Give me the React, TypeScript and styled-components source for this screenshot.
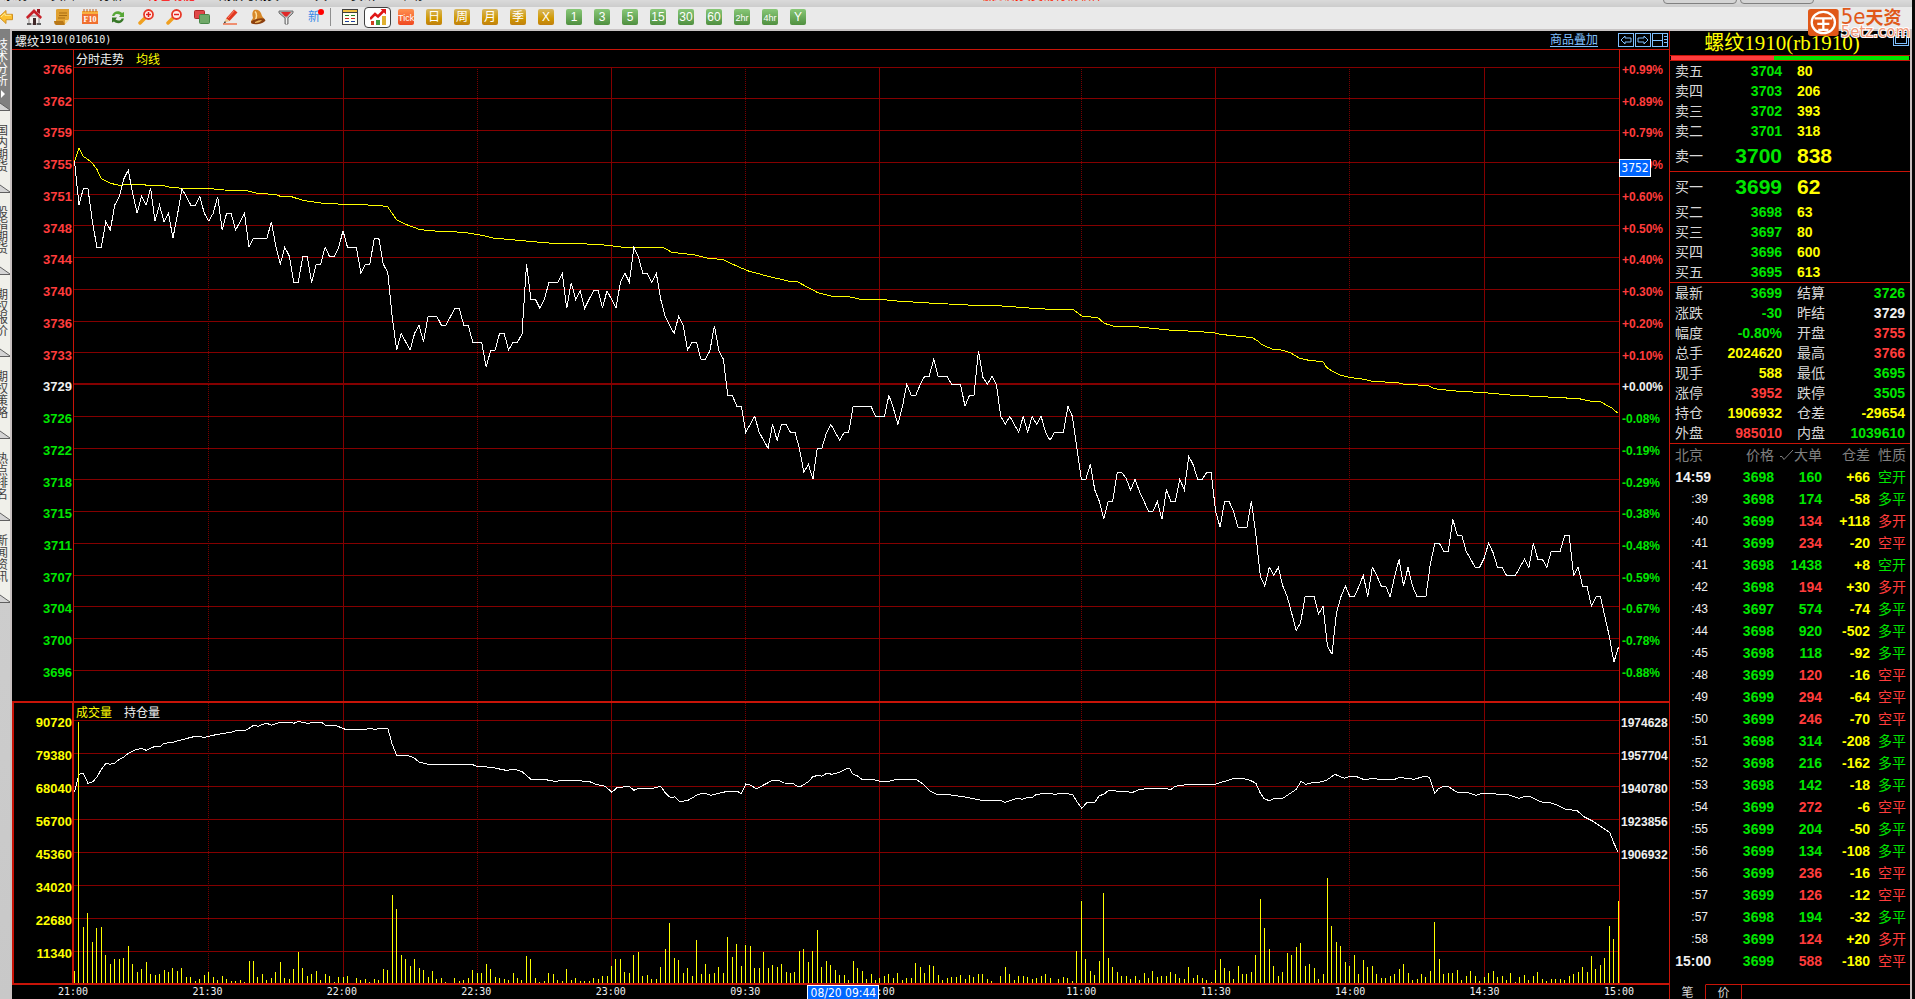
import React from "react";
import styled, { createGlobalStyle, css } from "styled-components";

const color = {
  up: "#ff3c3c",
  down: "#00e600",
  yellow: "#ffff00",
  white: "#f0f0f0",
  label: "#d8d8d8",
  dim: "#808080",
  frame: "#c81408",
  grid: "#840000",
  link: "#80c0ff",
  box: "#0066ff",
};

const cjk = `"Liberation Sans", "Noto Sans CJK SC", sans-serif`;
const mono = `"DejaVu Sans Mono", monospace`;

type Tone = "up" | "down" | "yellow" | "white";

const Global = createGlobalStyle`
  * { box-sizing: border-box; }
  html, body, #root { height: 100%; }
  body { margin: 0; background: #000; font-family: ${cjk}; overflow: hidden; }
  button { font: inherit; color: inherit; border: 0; padding: 0; margin: 0; background: none; cursor: pointer; }
  table { border-collapse: separate; border-spacing: 0; }
  td, th { padding: 0; font-weight: normal; text-align: left; }
`;

/* ---------- market data ---------- */

const MINUTES = 345;
const SUB = 3;

const priceRuns: { base: number; values: number[] }[] = [
  {
    base: 240,
    values: [
      94, 225, 175, 175, 275, 352, 352, 275, 300, 225, 200, 147, 121, 190, 250, 198, 225, 175, 273, 225,
      275, 250, 325, 255, 177, 200, 225, 225, 200, 250, 273, 250, 200, 300, 250, 250, 300, 275, 250, 352,
      325, 325, 325, 325, 275, 350, 402, 352, 378, 458, 458, 380, 380, 458, 403, 403, 352, 380, 380, 355,
      302, 352, 352, 352, 430, 403, 403, 325, 325, 403, 428, 560, 660, 610, 635, 660, 610, 586, 636, 560,
      560, 560, 586, 586, 560, 535, 535, 586, 586, 637, 637, 637, 712, 660, 660, 610, 610, 660, 637, 637,
      612, 403, 508, 508, 535, 508, 458, 458, 458, 430, 535, 458, 508, 482, 535, 508, 482, 482, 535, 482,
    ],
  },
  {
    base: 540,
    values: [
      208, 235, 157, 130, 157, 52, 80, 130, 130, 157, 130, 208, 260, 287, 310, 260, 285, 360, 337, 337,
      388, 388, 362, 287, 362, 388, 496, 496, 529, 529, 607, 583, 559, 607, 631, 655, 583, 631, 583, 583,
      607, 607, 655, 727, 703, 748, 655, 655, 610, 583, 607, 631, 607, 607, 529, 529, 529, 529, 529, 559,
      559, 559, 496, 535, 583, 530, 463, 496, 496, 463, 439, 439, 388, 439, 439, 439, 463, 463, 463, 529,
      496, 496, 362, 442, 463, 439, 463, 559, 583, 559, 583, 607, 559, 607, 559, 583, 559, 607, 631, 607,
      607, 607, 529, 559, 655,
    ],
  },
  {
    base: 840,
    values: [
      448, 448, 403, 480, 514, 568, 514, 514, 427, 427, 445, 480, 448, 485, 514, 544, 544, 514, 568, 480,
      514, 514, 448, 480, 379, 405, 448, 448, 427, 427, 544, 592, 514, 514, 544, 592, 592, 592, 514, 615,
      740, 768, 712, 736, 712, 768, 800, 850, 901, 878, 800, 800, 800, 852, 829, 948, 973, 850, 800, 768,
      800, 800, 770, 736, 800, 712, 736, 768, 768, 800, 740, 688, 768, 712, 768, 800, 800, 800, 700, 640,
      640, 664, 664, 568, 616, 616, 664, 688, 712, 712, 685, 640, 668, 712, 712, 736, 736, 736, 712, 688,
      712, 640, 688, 688, 712, 664, 664, 664, 616, 616, 736, 712, 768, 768, 829, 800, 800, 860, 920, 997,
      952,
    ],
  },
];

const averageRuns: { base: number; points: number[] }[] = [
  {
    base: 240,
    points: [
      0, 94, 1, 55, 2, 80, 3, 88, 4, 100, 5, 118, 6, 146, 8, 160, 10, 166, 12, 163, 15.5, 163, 16, 166,
      19.5, 166, 21, 171, 24, 175, 29.5, 175, 33.5, 180, 38.5, 182, 40.5, 189, 45, 194, 46, 199, 48.5, 200,
      51, 211, 55, 219, 60, 223, 68, 226, 70, 231, 72, 270, 74, 283, 77, 298, 79, 302, 87, 307, 91, 316,
      93.5, 324, 100, 332, 106, 339, 117, 343,
    ],
  },
  {
    base: 540,
    points: [
      119, 46, 122.7, 52, 131.5, 52, 133.5, 67, 138.4, 74, 141.4, 84, 145, 89, 147.8, 107, 150.6, 123,
      155, 139, 159.8, 154, 161.5, 155, 165, 180, 166.1, 188, 169.3, 199, 172.5, 199, 175.7, 208, 180, 208,
      183.7, 213, 190.9, 219, 199.6, 225, 206.4, 227, 213.2, 234, 218, 238, 223.1, 238, 225.1, 258,
      228.7, 263, 230.1, 280, 232.3, 289, 236.3, 289, 242.4, 297,
    ],
  },
  {
    base: 840,
    points: [
      244.5, 0, 247.8, 2, 254.7, 8, 255.9, 13, 263.2, 23, 264.4, 33, 265.2, 43, 267.7, 58, 269.4, 59,
      271.7, 68, 273.7, 84, 275.8, 91, 279, 95, 279.8, 112, 281, 123, 283, 136, 285.1, 143, 287.5, 146,
      290, 154, 295.7, 158, 296.9, 162, 302.5, 167, 303.8, 176, 308.6, 183, 315.1, 188, 320.8, 195,
      328.1, 200, 336.2, 206, 338.7, 213, 341.1, 216, 343.5, 234, 344.8, 249,
    ],
  },
];

const interestRuns: { base: number; points: number[] }[] = [
  {
    base: -39,
    points: [
      0, 305, 1, 253, 2, 250, 3, 280, 4, 276, 5, 262, 6, 238, 7, 220, 8, 223, 9, 219, 10, 208, 11, 202,
      12, 190, 13.5, 180, 15, 175, 16, 181, 18, 169, 19.2, 169, 20, 160, 22, 157, 24, 149, 27, 139,
      29, 142, 32, 133, 35, 127, 36.2, 121, 38.3, 121, 40, 106, 41, 109, 42, 103, 43, 100, 44, 106,
      46, 97, 48.5, 97, 49, 100, 50, 94, 52, 100, 54, 97, 55.2, 97, 56, 105, 58.5, 107, 60.5, 118,
      65, 118, 66, 115, 67, 118, 69, 115, 70, 115, 71, 163, 72, 196, 74, 196, 75, 199, 76, 205, 77, 216,
      79, 223, 88.7, 223, 90, 229,
    ],
  },
  {
    base: 111,
    points: [
      93.1, 82, 96.4, 91, 98.5, 88, 100, 95, 102, 118, 105.3, 119, 107.3, 124, 109.9, 121, 115, 124,
      116.4, 133, 118.6, 139, 120.1, 157, 121.2, 143, 124, 139, 125, 151, 126.1, 145, 129.3, 145, 131, 139,
      132.1, 160, 133.2, 173, 134.2, 170, 135.2, 185, 137.1, 181, 139.4, 163, 141, 160, 142.2, 166,
      145.9, 154, 148.3, 155, 149, 161, 150, 132, 151.1, 136, 152.4, 146, 156, 121, 157.3, 121, 158.6, 129,
      160.5, 130, 161.5, 139, 162.4, 139, 164.1, 124, 165, 110, 166.2, 106, 167, 109, 168.1, 100,
      169.3, 103, 171, 97, 172.7, 85, 173.2, 85, 173.8, 101, 175.1, 109, 175.9, 118, 178.3, 118, 180, 124,
      181.9, 124, 183.5, 119, 188.1, 118, 189.7, 133, 191.3, 154, 193, 165, 194.6, 163, 198.6, 170,
      202.7, 181, 206.9, 181, 207.9, 187, 209.2, 181, 210.8, 175, 211.8, 178, 212.8, 173, 214.1, 172,
      215, 163, 217.3, 160, 219.2, 163, 220.5, 160, 223, 163, 224.1, 187, 225.1, 205, 226.2, 188, 228, 187,
      229, 167, 230, 163, 231.1, 151, 233.5, 154, 236.5, 157, 238.1, 148, 240, 146, 244.1, 146, 244.9, 149,
      246, 139, 249, 133, 254.6, 134, 256.3, 127, 259.2, 115, 260.8, 115, 262.7, 121, 264, 130, 264.9, 157,
      265.8, 176, 267, 182, 268.1, 175, 270, 175, 271.7, 160, 273, 148, 274.1, 124, 275.1, 133, 276.5, 128,
      278.2, 127, 279.8, 121, 281.6, 103, 283.8, 115, 285, 109, 286.3, 109, 288.2, 119, 290.3, 115,
      292, 119, 294.9, 119, 296, 112, 299.3, 118, 301.7, 109, 302.8, 112, 303.3, 133, 304, 160, 304.8, 146,
      306.2, 138, 307, 140, 309, 157, 311.1, 157, 313.1, 166, 314.7, 160, 320.4, 164, 322.8, 175,
      324.4, 168, 325.2, 169, 326.9, 181, 328.1, 187, 329.3, 187, 330.9, 193, 333.3, 208, 335.8, 212,
      337.4, 231, 339.5, 245, 341.1, 260, 343.1, 278, 343.9, 307, 344.9, 335,
    ],
  },
];

const volumes = [
  37, 782, 169, 211, 124, 166, 169, 85, 58, 73, 73, 76, 112, 58, 34, 43, 64, 28, 25, 28,
  40, 34, 46, 37, 46, 19, 19, 7, 13, 25, 34, 19, 10, 22, 13, 7, 7, 10, 3, 67,
  67, 19, 28, 10, 16, 34, 64, 16, 13, 43, 94, 46, 22, 28, 37, 10, 28, 22, 3, 19,
  19, 22, 0, 16, 10, 13, 3, 13, 10, 43, 40, 265, 223, 85, 73, 52, 73, 46, 40, 19,
  37, 13, 16, 3, 0, 16, 7, 10, 16, 40, 31, 31, 58, 43, 19, 15, 12, 9, 30, 15,
  9, 81, 72, 15, 3, 6, 30, 27, 9, 6, 42, 9, 15, 6, 6, 6, 15, 12, 21, 21,
  51, 72, 72, 33, 30, 84, 93, 21, 24, 12, 12, 48, 102, 180, 75, 69, 30, 45, 21, 129,
  27, 57, 27, 30, 48, 30, 138, 78, 117, 51, 114, 111, 45, 45, 93, 45, 54, 48, 57, 33,
  30, 33, 96, 102, 63, 96, 159, 48, 66, 54, 39, 24, 24, 9, 66, 45, 36, 12, 27, 9,
  15, 21, 27, 15, 30, 9, 15, 15, 60, 48, 30, 54, 51, 24, 9, 15, 18, 18, 24, 12,
  24, 18, 27, 27, 12, 6, 0, 21, 48, 27, 9, 21, 21, 18, 12, 15, 21, 27, 15, 0,
  12, 18, 15, 6, 96, 246, 72, 36, 24, 66, 270, 75, 48, 33, 21, 21, 12, 21, 9, 30,
  15, 36, 18, 21, 21, 33, 27, 15, 12, 48, 15, 24, 15, 9, 3, 39, 72, 45, 36, 12,
  51, 27, 27, 33, 84, 252, 165, 102, 51, 21, 33, 90, 84, 108, 120, 51, 57, 45, 12, 27,
  315, 171, 123, 111, 63, 51, 84, 27, 69, 48, 51, 27, 15, 15, 21, 27, 42, 57, 30, 9,
  12, 27, 18, 36, 183, 72, 27, 30, 30, 39, 9, 21, 36, 21, 6, 18, 30, 36, 18, 21,
  9, 30, 3, 18, 24, 9, 21, 33, 12, 6, 12, 12, 12, 9, 21, 27, 33, 48, 33, 81,
  42, 54, 75, 171, 132, 246,
];

const priceLabels = [
  3766, 3762, 3759, 3755, 3751, 3748, 3744, 3740, 3736, 3733, 3729, 3726, 3722, 3718, 3715, 3711, 3707, 3704,
  3700, 3696,
];
const percentLabels = [
  "+0.99%", "+0.89%", "+0.79%", "+0.69%", "+0.60%", "+0.50%", "+0.40%", "+0.30%", "+0.20%", "+0.10%", "+0.00%",
  "-0.08%", "-0.19%", "-0.29%", "-0.38%", "-0.48%", "-0.59%", "-0.67%", "-0.78%", "-0.88%",
];
const volumeLabels = [90720, 79380, 68040, 56700, 45360, 34020, 22680, 11340];
const interestLabels = [1974628, 1957704, 1940780, 1923856, 1906932];
const timeTicks: [string, number][] = [
  ["21:00", 30], ["21:30", 30], ["22:00", 30], ["22:30", 30], ["23:00", 30], ["09:30", 30], ["10:00", 45],
  ["11:00", 30], ["11:30", 30], ["14:00", 30], ["14:30", 30], ["15:00", 0],
];
const toneAt = (i: number): Tone => (i < 10 ? "up" : i === 10 ? "white" : "down");

/* ---------- page frame ---------- */

const Page = styled.div`
  position: relative;
  display: flex;
  flex-direction: column;
  min-height: 100vh;
  height: 100vh;
  border-right: 3px solid #080808;
  background: #c8c4c4;
`;

const MenuBar = styled.nav`
  display: flex;
  align-items: flex-end;
  height: 7px;
  padding-left: 3px;
  gap: 24px;
  overflow: hidden;
  background: linear-gradient(#dadada, #cccccc);
  flex: none;
`;

const MenuItem = styled.button<{ $hot?: boolean }>`
  margin-bottom: 4px;
  font-size: 12px;
  line-height: 14px;
  white-space: nowrap;
  color: ${(p) => (p.$hot ? "#ff0000" : "#000")};
`;

const MenuNotice = styled.span`
  margin: 0 auto 4px;
  font-size: 12px;
  line-height: 14px;
  color: #ff2000;
`;

const MenuPill = styled.button`
  width: 74px;
  height: 22px;
  margin: 0 -21px 3px 0;
  padding-bottom: 2px;
  border: 1px solid #808080;
  border-radius: 4px;
  background: #d4d4d4;
  color: #e00000;
  font-size: 12px;
  line-height: 16px;
  flex: none;
  &:last-child { margin-right: 98px; }
`;

const Toolbar = styled.div`
  display: flex;
  align-items: center;
  height: 24px;
  padding-bottom: 2px;
  border-bottom: 2px solid #c8c4c4;
  background: #eaeaea;
  overflow: hidden;
  flex: none;
`;

const ToolButton = styled.button<{ $active?: boolean; $first?: boolean }>`
  display: flex;
  align-items: center;
  justify-content: center;
  width: ${(p) => (p.$active ? 27 : 28)}px;
  height: 21px;
  flex: none;
  ${(p) => p.$first && css`margin-left: -8px;`}
  ${(p) =>
    p.$active &&
    css`
      margin-right: 1px;
      border: 1px solid #404040;
      border-radius: 4px;
      background: #fff;
    `}
`;

const ToolSeparator = styled.span`
  width: 1px;
  height: 18px;
  margin: 0 5px 0 2px;
  background: #909090;
`;

const Badge = styled.span<{ $kind: "gold" | "green" | "tick" }>`
  display: block;
  width: 16px;
  height: 16px;
  border-radius: 2px;
  text-align: center;
  color: #fff;
  font: 12px/16px "Liberation Sans Narrow", ${cjk};
  overflow: hidden;
  white-space: nowrap;
  background: ${(p) =>
    p.$kind === "gold"
      ? "linear-gradient(#d8b860, #d09800 60%, #c08010)"
      : p.$kind === "green"
      ? "linear-gradient(#88c878, #509040)"
      : "linear-gradient(#ff9050, #f04820)"};
`;

const SmallCaps = styled.span`
  font-size: 9px;
`;

const NewMark = styled.span`
  position: relative;
  font-size: 12px;
  line-height: 16px;
  color: #3c8ce8;
  &::after {
    content: "";
    position: absolute;
    right: -4px;
    top: 0;
    width: 6px;
    height: 6px;
    border-radius: 50%;
    background: #f00;
  }
`;

const Body = styled.div`
  display: flex;
  flex: 1;
  min-height: 0;
`;

/* ---------- left sidebar ---------- */

const Sidebar = styled.nav`
  width: 12px;
  margin-top: -2px;
  border-right: 2px solid #c8c0c0;
  background: linear-gradient(#d4d4d4, #c8c8c8);
  flex: none;
  overflow: hidden;
`;

const SideTab = styled.button<{ $active?: boolean }>`
  display: flex;
  flex-direction: column;
  align-items: flex-start;
  width: 10px;
  height: 82px;
  padding-top: ${(p) => (p.$active ? 10 : 14)}px;
  overflow: hidden;
  background: ${(p) => (p.$active ? "#808080" : "#f0f0ea")};
  color: ${(p) => (p.$active ? "#fff" : "#404040")};
`;

const SideText = styled.span`
  width: 12px;
  height: 48px;
  margin-left: -4px;
  font-size: 12px;
  line-height: 12px;
  word-break: break-all;
  text-align: left;
  flex: none;
`;

const SideArrow = styled.svg`
  display: block;
  width: 5px;
  height: 8px;
  margin-top: 3px;
  flex: none;
`;

const SideSlant = styled.svg`
  display: block;
  width: 10px;
  height: 9px;
  margin-top: auto;
  flex: none;
`;

/* ---------- chart ---------- */

const Chart = styled.main`
  display: flex;
  flex-direction: column;
  flex: 1;
  min-width: 0;
  background: #000;
  border-right: 1px solid ${color.frame};
`;

const TitleBar = styled.header`
  display: flex;
  align-items: center;
  height: 19px;
  padding-left: 3px;
  border-bottom: 1px solid ${color.frame};
  color: ${color.white};
  font-size: 12px;
  flex: none;
`;

const TitleCode = styled.span`
  font: 10px/18px ${mono};
`;

const OverlayLink = styled.a`
  margin-left: auto;
  margin-right: 20px;
  color: ${color.link};
  font-size: 12px;
  line-height: 14px;
  text-decoration: underline;
  text-underline-offset: 2px;
`;

const FrameButton = styled.button`
  width: 16px;
  height: 14px;
  margin-right: 1px;
  svg { display: block; }
`;

const PricePane = styled.section`
  display: flex;
  flex: 651 1 0;
  min-height: 0;
`;

const VolumePane = styled.section`
  display: flex;
  flex: 280 1 0;
  min-height: 0;
  border-top: 2px solid ${color.frame};
`;

const LeftAxis = styled.ol<{ $boxed?: boolean }>`
  display: flex;
  flex-direction: column;
  justify-content: space-between;
  width: 62px;
  margin: 0;
  padding: ${(p) => (p.$boxed ? "12px 0 21px" : "12px 1px 20px 0")};
  border-right: ${(p) => (p.$boxed ? 2 : 1)}px solid ${color.frame};
  border-left: ${(p) => (p.$boxed ? 2 : 0)}px solid ${color.frame};
  list-style: none;
  font: bold 13px/16px "Liberation Sans", sans-serif;
  text-align: right;
  flex: none;
`;

const RightAxis = styled.ol<{ $low?: boolean }>`
  position: relative;
  display: flex;
  flex-direction: column;
  justify-content: space-between;
  width: 50px;
  margin: 0;
  padding: ${(p) => (p.$low ? "12px 0 120px 1px" : "12px 0 20px 2px")};
  border-left: 1px solid ${color.frame};
  list-style: none;
  font: bold 12px/16px "Liberation Sans", sans-serif;
  white-space: nowrap;
  flex: none;
`;

const AxisLabel = styled.li<{ $tone: Tone }>`
  color: ${(p) => color[p.$tone]};
`;

const Plot = styled.div`
  position: relative;
  flex: 1;
  min-width: 0;
`;

const PlotSvg = styled.svg`
  display: block;
  width: 100%;
  height: 100%;
`;

const Legend = styled.div`
  position: absolute;
  left: 2px;
  top: 2px;
  display: flex;
  gap: 12px;
  font-size: 12px;
  line-height: 16px;
`;

const LegendItem = styled.span<{ $tone: Tone }>`
  color: ${(p) => color[p.$tone]};
`;

const CursorPrice = styled.li`
  position: absolute;
  left: -1px;
  top: 109px;
  width: 32px;
  height: 18px;
  border: 1px solid #fff;
  background: ${color.box};
  color: #fff;
  font: 12px/16px "DejaVu Sans Condensed", "DejaVu Sans", sans-serif;
  text-align: center;
`;

const TimeAxis = styled.div`
  position: relative;
  display: grid;
  grid-template-columns: ${timeTicks.map((t) => `${t[1]}fr`).join(" ")};
  height: 16px;
  padding: 0 50px 0 61px;
  border-top: 2px solid ${color.frame};
  font: 10px/14px ${mono};
  color: ${color.white};
  overflow: hidden;
  flex: none;
`;

const TimeTick = styled.time`
  display: flex;
  justify-content: center;
  width: 0;
  white-space: nowrap;
`;

const CursorTime = styled.output`
  position: absolute;
  left: 48%;
  top: 0;
  width: 72px;
  height: 15px;
  border: 1px solid #fff;
  border-bottom: 0;
  background: ${color.box};
  color: #fff;
  font: 12px/14px "DejaVu Sans Condensed", "DejaVu Sans", sans-serif;
  text-align: center;
  white-space: nowrap;
`;

/* ---------- quote panel ---------- */

const Panel = styled.aside`
  display: flex;
  flex-direction: column;
  width: 242px;
  border-right: 2px solid #c8c0c0;
  background: #000;
  flex: none;
`;

const PanelTitle = styled.h1`
  position: relative;
  height: 24px;
  margin: 0;
  padding-right: 16px;
  color: ${color.yellow};
  font: normal 20px/24px "Liberation Serif", "Noto Sans CJK SC", serif;
  text-align: center;
`;

const PanelCode = styled.span`
  font-size: 21px;
`;

const PanelToggle = styled.button`
  position: absolute;
  right: 1px;
  top: 1px;
  width: 16px;
  height: 14px;
  border: 1px solid ${color.link};
  &::after {
    content: "";
    display: block;
    width: 10px;
    height: 7px;
    margin: 0 auto;
    border: 1px solid ${color.link};
  }
`;

const Ratio = styled.div`
  display: flex;
  height: 6px;
  padding: 0 1px;
  border: solid ${color.frame};
  border-width: 1px 0;
`;

const RatioPart = styled.span<{ $tone: Tone; $share: number }>`
  flex: ${(p) => p.$share} 1 0;
  background: ${(p) => color[p.$tone]};
`;

const QuoteTable = styled.table`
  width: 100%;
  table-layout: fixed;
  border-bottom: 1px solid ${color.frame};
  color: ${color.label};
  font-size: 14px;
`;

const Col = styled.col<{ $w?: number }>`
  width: ${(p) => (p.$w ? `${p.$w}px` : "auto")};
`;

const Row = styled.tr<{ $big?: boolean }>`
  height: ${(p) => (p.$big ? 30 : 20)}px;
  line-height: 18px;
`;

const RowLabel = styled.th<{ $indent: number }>`
  padding-left: ${(p) => p.$indent}px;
  white-space: nowrap;
`;

const Figure = styled.td<{ $tone: Tone; $left?: boolean; $big?: boolean; $pad?: number }>`
  color: ${(p) => color[p.$tone]};
  font-weight: bold;
  font-size: ${(p) => (p.$big ? 21 : 14)}px;
  text-align: ${(p) => (p.$left ? "left" : "right")};
  padding-left: ${(p) => (p.$left ? 15 : 0)}px;
  padding-right: ${(p) => p.$pad ?? 0}px;
  white-space: nowrap;
`;

const TradeTable = styled.table`
  width: 100%;
  table-layout: fixed;
  color: ${color.label};
  font-size: 14px;
`;

const TradeRow = styled.tr`
  height: 22px;
  line-height: 20px;
`;

const TradeHead = styled.th<{ $left?: boolean; $pad?: number }>`
  color: ${color.dim};
  text-align: ${(p) => (p.$left ? "left" : "right")};
  padding-left: ${(p) => (p.$left ? 5 : 0)}px;
  padding-right: ${(p) => p.$pad ?? 0}px;
  white-space: nowrap;
`;

const TradeTime = styled.td<{ $full: boolean }>`
  color: ${color.white};
  text-align: right;
  padding-right: ${(p) => (p.$full ? 1 : 4)}px;
  font-size: ${(p) => (p.$full ? 14 : 12)}px;
  font-weight: ${(p) => (p.$full ? "bold" : "normal")};
`;

const Nature = styled.td<{ $tone: Tone }>`
  color: ${(p) => color[p.$tone]};
  text-align: right;
  padding-right: 4px;
`;

const Check = styled.svg`
  width: 14px;
  height: 11px;
`;

const PanelTabs = styled.div`
  display: flex;
  margin-top: auto;
  height: 15px;
  font-size: 12px;
  color: ${color.label};
`;

const PanelTab = styled.button<{ $active?: boolean }>`
  width: 36px;
  height: 15px;
  padding-top: 1px;
  line-height: 14px;
  overflow: hidden;
  border-top: 1px solid ${(p) => (p.$active ? "transparent" : color.frame)};
  border-right: 1px solid ${color.frame};
`;

const PanelTabsRest = styled.span`
  flex: 1;
  border-top: 1px solid ${color.frame};
`;

const Logo = styled.div`
  position: absolute;
  top: 8px;
  right: 2px;
  display: flex;
  gap: 2px;
  width: 102px;
`;

const LogoText = styled.div`
  display: flex;
  flex-direction: column;
  color: #e05818;
  font: bold 18px/17px "Noto Sans CJK SC", sans-serif;
  white-space: nowrap;
`;

const LogoLatin = styled.span`
  font: 22px/17px "DejaVu Sans Condensed", "DejaVu Sans", sans-serif;
`;

const LogoDomain = styled.span`
  color: #f09878;
  font: 15px/15px "DejaVu Sans", sans-serif;
  -webkit-text-stroke: 2px #fff;
  paint-order: stroke fill;
`;

/* ---------- drawings ---------- */

const Icon: React.FC<{ children: React.ReactNode }> = ({ children }) => (
  <svg width="16" height="16" viewBox="0 0 16 16" aria-hidden="true">
    {children}
  </svg>
);

const ArrowIcon = () => (
  <Icon>
    <path d="M1 8 8 1.5v3.8h6.5v5.4H8v3.8z" fill="#fcc030" stroke="#d09020" />
    <path d="M3 8 7 4.3v2h6" fill="none" stroke="#ffe890" />
  </Icon>
);
const HomeIcon = () => (
  <Icon>
    <path d="M3 7h10v8H3z" fill="#f4f0ee" stroke="#908888" />
    <path d="M0 8 8 0l8 8-1.500 2L8 4 1.500 10z" fill="#c82028" />
    <path d="M11 0h3v5l-3-2z" fill="#a01820" />
    <path d="M7 9h3v7H7z" fill="#402828" />
    <path d="M1 14h4v2H1zM11 14h4v2h-4z" fill="#606060" />
  </Icon>
);
const NoteIcon = () => (
  <Icon>
    <path d="M2 1q0-1 2-1h11v10l-4 5H2q-2-1-1-3h1z" fill="#e0a030" />
    <path d="M5 4h8M5 6.5h8M4 9h7" stroke="#a86c10" fill="none" />
    <path d="M0 12h9l2 4H2q-2-1-2-4z" fill="#b87818" />
    <path d="M11 15v-4h4z" fill="#f8d890" />
  </Icon>
);
const F10Icon = () => (
  <Icon>
    <path d="M0 2h16v13H0z" fill="#f07030" />
    <path d="M0 2h16v3H0z" fill="#f8b040" />
    <path d="M2 0v3M5 0v3M8 0v3M11 0v3M14 0v3" stroke="#c06020" />
    <text x="8" y="13" fontSize="8" fontWeight="bold" textAnchor="middle" fill="#fff" fontFamily="Liberation Serif">
      F10
    </text>
  </Icon>
);
const RefreshIcon = () => (
  <Icon>
    <path d="M2 7c1-5 7-6 10-3l2-1v5H9l1.500-2C8 4.500 5 4.500 4.500 7z" fill="#58a838" />
    <path d="M14 9.500c-1 5-7 6-10 3l-2 1v-5h5l-1.500 2c2.500 1.500 5.500 1.500 6-1z" fill="#387828" />
  </Icon>
);
const MagnifierIcon: React.FC<{ plus?: boolean }> = ({ plus }) => (
  <Icon>
    <path d="m2 14 4.500-4.500" stroke="#f0a020" strokeWidth="3.500" strokeLinecap="round" />
    <circle cx="10.500" cy="5.500" r="4.500" fill="#fff0ec" stroke="#e83828" strokeWidth="1.800" />
    <path d={plus ? "M8 5.500h5M10.500 3v5" : "M8 5.500h5"} stroke="#e02020" strokeWidth="1.500" />
  </Icon>
);
const LayersIcon = () => (
  <Icon>
    <rect x=".5" y="1.500" width="10" height="8" rx="1" fill="#e04848" stroke="#b02828" />
    <rect x="5.500" y="5.500" width="10" height="9" rx="1" fill="#70a868" stroke="#488848" />
  </Icon>
);
const PencilIcon = () => (
  <Icon>
    <path d="M1 15h14" stroke="#f07048" strokeWidth="1.500" />
    <path d="m4 9.500 8-9 3.500 3-8 8.500z" fill="#e03820" />
    <path d="m6 9 6.500-7.500" stroke="#ff8068" />
    <path d="m4 9.500 3.500 2.500-5.500 2z" fill="#f0c890" />
    <path d="m3 12-1.500 2.500L4 13.500z" fill="#303030" />
  </Icon>
);
const BellIcon = () => (
  <Icon>
    <path d="M4 1c5-1 7 2 8 6l3 4-8 4-6-1v-2l2-3C2 6 2 3 4 1z" fill="#d88828" />
    <path d="M5 2.500c2 2 2 6 0 9" stroke="#ffe0a0" fill="none" strokeWidth="1.500" />
    <path d="M1 12.500q6-4 13-3l1.500 2c-2 3-10 5-14 3z" fill="#8c4010" />
    <path d="M5 13q3-2 7-2-2 3-7 3z" fill="#f0b860" />
  </Icon>
);
const FilterIcon = () => (
  <Icon>
    <path d="M1 2h14v2l-5 5v6H7V9L1 4z" fill="#b8b8b8" stroke="#707070" />
    <path d="M3 3h10l-4 4.500H7z" fill="#e02828" />
    <path d="M8.500 9v6" stroke="#f0f0f0" />
  </Icon>
);
const ListIcon = () => (
  <Icon>
    <rect x=".5" y=".5" width="15" height="15" fill="#fffff0" stroke="#404040" />
    <path d="M1 2h14" stroke="#f0c040" strokeWidth="2" />
    <path d="M1 3.500h14" stroke="#404040" />
    <path d="M3 6.500h4M9 6.500h4" stroke="#208020" />
    <path d="M3 9.500h4M9 9.500h4" stroke="#d02020" />
    <path d="M3 12.500h4M9 12.500h4" stroke="#2040a0" />
  </Icon>
);
const TrendIcon = () => (
  <Icon>
    <path d="M1 12h3v4H1z" fill="#d04020" />
    <path d="M6 11h4v5H6z" fill="#40a040" />
    <path d="M12 7h4v9h-4z" fill="#e0b030" />
    <path d="m0 10 5-5 3 2.500 6-6" fill="none" stroke="#e01818" strokeWidth="2.500" />
    <path d="M10.500 0H16v5.500z" fill="#e01818" />
  </Icon>
);

const frameGlyphs: [string, string][] = [
  ["后退", "M3 7l4-4v2h6v4H7v2z"],
  ["前进", "M13 7 9 3v2H3v4h6v2z"],
  ["布局", "M10.500 0v14M0 7.500h10M12 3.500h3M12 6.500h3M12 9.500h3"],
];

const X_STEP = 4.475;
const px = (minute: number) => 0.5 + minute * X_STEP;
const crisp = (minute: number) => Math.floor(px(minute)) + 0.5;

const pairs = (runs: { base: number; points: number[] }[]) =>
  runs
    .flatMap(({ base, points }) =>
      points.flatMap((v, i) => (i % 2 ? [] : [`${px(v).toFixed(1)},${((points[i + 1] + base) / SUB).toFixed(1)}`]))
    )
    .join(" ");

const pricePoints = priceRuns
  .flatMap(({ base, values }) => values.map((v) => (v + base) / SUB))
  .map((y, i) => `${px(i).toFixed(1)},${y.toFixed(1)}`)
  .join(" ");

const halfHours: [number, boolean][] = [
  [30, true], [60, false], [90, true], [120, false], [150, true], [180, false], [225, true], [255, false],
  [285, true], [315, false],
];

const VerticalGrid: React.FC<{ height: number; from: number }> = ({ height, from }) => (
  <>
    {halfHours.map(([m, dotted]) => (
      <line
        key={m}
        x1={crisp(m)}
        x2={crisp(m)}
        y1={from}
        y2={height}
        stroke={dotted ? "#780000" : color.grid}
        strokeDasharray={dotted ? "1 1" : undefined}
      />
    ))}
  </>
);

const PriceChart = () => (
  <PlotSvg viewBox="0 0 1545 651" preserveAspectRatio="none" shapeRendering="crispEdges" role="img" aria-label="分时走势">
    <VerticalGrid height={651} from={17} />
    {priceLabels.map((p, i) => {
      const y = Math.floor(17.2 + i * 31.75);
      return i === 10 ? (
        <line key={p} x1="0" x2="1545" y1={y} y2={y} stroke={color.grid} strokeWidth="2" />
      ) : (
        <line key={p} x1="0" x2="1545" y1={y + 0.5} y2={y + 0.5} stroke={color.grid} />
      );
    })}
    <polyline points={pairs(averageRuns)} fill="none" stroke={color.yellow} />
    <polyline points={pricePoints} fill="none" stroke="#fff" />
  </PlotSvg>
);

const VolumeChart = () => (
  <PlotSvg viewBox="0 0 1545 280" preserveAspectRatio="none" shapeRendering="crispEdges" role="img" aria-label="成交量">
    <VerticalGrid height={280} from={0} />
    {volumeLabels.map((v, i) => (
      <line key={v} x1="0" x2="1545" y1={17.5 + i * 33} y2={17.5 + i * 33} stroke={color.grid} />
    ))}
    <polyline points={pairs(interestRuns)} fill="none" stroke="#fff" />
    {volumes.slice(0, MINUTES + 1).map((v, i) =>
      v ? <line key={i} x1={crisp(i)} x2={crisp(i)} y1={280 - v / SUB} y2={280} stroke={color.yellow} /> : null
    )}
  </PlotSvg>
);

/* ---------- panel data ---------- */

const asks: [string, number, number][] = [
  ["卖五", 3704, 80], ["卖四", 3703, 206], ["卖三", 3702, 393], ["卖二", 3701, 318], ["卖一", 3700, 838],
];
const bids: [string, number, number][] = [
  ["买一", 3699, 62], ["买二", 3698, 63], ["买三", 3697, 80], ["买四", 3696, 600], ["买五", 3695, 613],
];
const stats: [string, string, Tone, string, string, Tone][] = [
  ["最新", "3699", "down", "结算", "3726", "down"],
  ["涨跌", "-30", "down", "昨结", "3729", "white"],
  ["幅度", "-0.80%", "down", "开盘", "3755", "up"],
  ["总手", "2024620", "yellow", "最高", "3766", "up"],
  ["现手", "588", "yellow", "最低", "3695", "down"],
  ["涨停", "3952", "up", "跌停", "3505", "down"],
  ["持仓", "1906932", "yellow", "仓差", "-29654", "yellow"],
  ["外盘", "985010", "up", "内盘", "1039610", "down"],
];
const trades: [string, number, number, string, string, Tone][] = [
  ["14:59", 3698, 160, "+66", "空开", "down"],
  [":39", 3698, 174, "-58", "多平", "down"],
  [":40", 3699, 134, "+118", "多开", "up"],
  [":41", 3699, 234, "-20", "空平", "up"],
  [":41", 3698, 1438, "+8", "空开", "down"],
  [":42", 3698, 194, "+30", "多开", "up"],
  [":43", 3697, 574, "-74", "多平", "down"],
  [":44", 3698, 920, "-502", "多平", "down"],
  [":45", 3698, 118, "-92", "多平", "down"],
  [":48", 3699, 120, "-16", "空平", "up"],
  [":49", 3699, 294, "-64", "空平", "up"],
  [":50", 3699, 246, "-70", "空平", "up"],
  [":51", 3698, 314, "-208", "多平", "down"],
  [":52", 3698, 216, "-162", "多平", "down"],
  [":53", 3698, 142, "-18", "多平", "down"],
  [":54", 3699, 272, "-6", "空平", "up"],
  [":55", 3699, 204, "-50", "多平", "down"],
  [":56", 3699, 134, "-108", "多平", "down"],
  [":56", 3699, 236, "-16", "空平", "up"],
  [":57", 3699, 126, "-12", "空平", "up"],
  [":57", 3698, 194, "-32", "多平", "down"],
  [":58", 3699, 124, "+20", "多开", "up"],
  ["15:00", 3699, 588, "-180", "空平", "up"],
];

const Depth: React.FC<{ rows: [string, number, number][]; big: number }> = ({ rows, big }) => (
  <QuoteTable>
    <colgroup>
      <Col $w={40} />
      <Col $w={72} />
      <Col />
    </colgroup>
    <tbody>
      {rows.map(([name, price, qty], i) => (
        <Row key={name} $big={i === big}>
          <RowLabel scope="row" $indent={5}>{name}</RowLabel>
          <Figure $tone="down" $big={i === big}>{price}</Figure>
          <Figure $tone="yellow" $left $big={i === big}>{qty}</Figure>
        </Row>
      ))}
    </tbody>
  </QuoteTable>
);

const tools: [string, React.ReactNode][] = [
  ["返回", <ArrowIcon />],
  ["首页", <HomeIcon />],
  ["公告", <NoteIcon />],
  ["资料", <F10Icon />],
  ["刷新", <RefreshIcon />],
  ["放大", <MagnifierIcon plus />],
  ["缩小", <MagnifierIcon />],
  ["叠加", <LayersIcon />],
  ["画线", <PencilIcon />],
  ["预警", <BellIcon />],
  ["筛选", <FilterIcon />],
  ["新功能", <NewMark>新</NewMark>],
];

const goldPeriods = ["日", "周", "月", "季", "X"];
const greenPeriods = ["1", "3", "5", "15", "30", "60", "2hr", "4hr", "Y"];
const sideTabs = ["技术分析", "国内期货", "股指期货", "期权报价", "期权策略", "热点排名", "新闻资讯"];

export default function App() {
  return (
    <Page>
      <Global />
      <MenuBar>
        {["系统", "页面", "分析"].map((t) => <MenuItem key={t}>{t}</MenuItem>)}
        <MenuItem $hot>特色功能</MenuItem>
        {["期权与期货", "工具", "资讯", "帮助"].map((t) => <MenuItem key={t}>{t}</MenuItem>)}
        <MenuNotice>赢顺期货交易行情软件</MenuNotice>
        <MenuPill>期货开户</MenuPill>
        <MenuPill>在线咨询</MenuPill>
      </MenuBar>
      <Toolbar>
        {tools.map(([name, icon], i) => (
          <ToolButton key={name} aria-label={name} $first={i === 0}>{icon}</ToolButton>
        ))}
        <ToolSeparator />
        <ToolButton aria-label="报价列表"><ListIcon /></ToolButton>
        <ToolButton aria-label="分时图" $active><TrendIcon /></ToolButton>
        <ToolButton><Badge $kind="tick"><SmallCaps>Tick</SmallCaps></Badge></ToolButton>
        {goldPeriods.map((t) => (
          <ToolButton key={t}><Badge $kind="gold">{t}</Badge></ToolButton>
        ))}
        {greenPeriods.map((t) => (
          <ToolButton key={t}>
            <Badge $kind="green">{t.length > 2 ? <SmallCaps>{t}</SmallCaps> : t}</Badge>
          </ToolButton>
        ))}
      </Toolbar>
      <Body>
        <Sidebar>
          {sideTabs.map((t, i) => (
            <SideTab key={t} $active={i === 0}>
              <SideText>{t}</SideText>
              {i === 0 && (
                <SideArrow viewBox="0 0 5 8"><path d="M1 0v8l4-4z" fill="#fff" /></SideArrow>
              )}
              <SideSlant viewBox="0 0 10 9">
                <path d="M0 1v8h10v-1z" fill="#d4d4d4" />
                <path d="M0 1l10 7M0 8.500h10" stroke="#606060" fill="none" />
              </SideSlant>
            </SideTab>
          ))}
        </Sidebar>
        <Chart>
          <TitleBar>
            螺纹<TitleCode>1910(010610)</TitleCode>
            <OverlayLink href="#overlay">商品叠加</OverlayLink>
            {frameGlyphs.map(([name, d]) => (
              <FrameButton key={name} aria-label={name}>
                <svg width="16" height="14" viewBox="0 0 16 14">
                  <rect x=".5" y=".5" width="15" height="13" fill="none" stroke={color.link} />
                  <path d={d} fill="none" stroke={color.link} />
                </svg>
              </FrameButton>
            ))}
          </TitleBar>
          <PricePane>
            <LeftAxis>
              {priceLabels.map((p, i) => <AxisLabel key={p} $tone={toneAt(i)}>{p}</AxisLabel>)}
            </LeftAxis>
            <Plot>
              <PriceChart />
              <Legend>
                <LegendItem $tone="white">分时走势</LegendItem>
                <LegendItem $tone="yellow">均线</LegendItem>
              </Legend>
            </Plot>
            <RightAxis>
              {percentLabels.map((p, i) => <AxisLabel key={p} $tone={toneAt(i)}>{p}</AxisLabel>)}
              <CursorPrice>3752</CursorPrice>
            </RightAxis>
          </PricePane>
          <VolumePane>
            <LeftAxis $boxed>
              {volumeLabels.map((v) => <AxisLabel key={v} $tone="yellow">{v}</AxisLabel>)}
            </LeftAxis>
            <Plot>
              <VolumeChart />
              <Legend>
                <LegendItem $tone="yellow">成交量</LegendItem>
                <LegendItem $tone="white">持仓量</LegendItem>
              </Legend>
            </Plot>
            <RightAxis $low>
              {interestLabels.map((v) => <AxisLabel key={v} $tone="white">{v}</AxisLabel>)}
            </RightAxis>
          </VolumePane>
          <TimeAxis>
            {timeTicks.map(([t]) => <TimeTick key={t}>{t}</TimeTick>)}
            <CursorTime>08/20 09:44</CursorTime>
          </TimeAxis>
        </Chart>
        <Panel>
          <PanelTitle>
            螺纹<PanelCode>1910(rb1910)</PanelCode>
            <PanelToggle aria-label="展开" />
          </PanelTitle>
          <Ratio>
            <RatioPart $tone="up" $share={103} />
            <RatioPart $tone="down" $share={135} />
          </Ratio>
          <Depth rows={asks} big={4} />
          <Depth rows={bids} big={0} />
          <QuoteTable>
            <colgroup>
              <Col $w={40} />
              <Col $w={72} />
              <Col $w={48} />
              <Col />
            </colgroup>
            <tbody>
              {stats.map(([a, av, at, b, bv, bt]) => (
                <Row key={a}>
                  <RowLabel scope="row" $indent={5}>{a}</RowLabel>
                  <Figure $tone={at}>{av}</Figure>
                  <RowLabel scope="row" $indent={15}>{b}</RowLabel>
                  <Figure $tone={bt} $pad={5}>{bv}</Figure>
                </Row>
              ))}
            </tbody>
          </QuoteTable>
          <TradeTable>
            <colgroup>
              <Col $w={42} />
              <Col $w={62} />
              <Col $w={48} />
              <Col $w={48} />
              <Col />
            </colgroup>
            <thead>
              <TradeRow>
                <TradeHead $left>北京</TradeHead>
                <TradeHead>价格</TradeHead>
                <TradeHead>
                  <Check viewBox="0 0 14 11" aria-hidden="true">
                    <path d="M0 7.500h2l2 3L13 1" fill="none" stroke={color.dim} />
                  </Check>
                  大单
                </TradeHead>
                <TradeHead>仓差</TradeHead>
                <TradeHead $pad={4}>性质</TradeHead>
              </TradeRow>
            </thead>
            <tbody>
              {trades.map(([time, price, lots, diff, nature, tone], i) => (
                <TradeRow key={i}>
                  <TradeTime $full={time.length > 3}>{time}</TradeTime>
                  <Figure $tone="down">{price}</Figure>
                  <Figure $tone={tone}>{lots}</Figure>
                  <Figure $tone="yellow">{diff}</Figure>
                  <Nature $tone={tone}>{nature}</Nature>
                </TradeRow>
              ))}
            </tbody>
          </TradeTable>
          <PanelTabs>
            <PanelTab $active>笔</PanelTab>
            <PanelTab>价</PanelTab>
            <PanelTabsRest />
          </PanelTabs>
        </Panel>
      </Body>
      <Logo>
        <svg width="33" height="29" viewBox="0 0 33 29" aria-hidden="true">
          <rect width="33" height="29" rx="3" fill="#e05818" />
          <ellipse cx="16.500" cy="14.500" rx="12.500" ry="11.500" fill="none" stroke="#fff" strokeWidth="2.500" />
          <path d="M7 10h19M16.500 10v13M10 16h13M11 22.500h11" fill="none" stroke="#fff" strokeWidth="2.500" />
        </svg>
        <LogoText>
          <span><LogoLatin>5e</LogoLatin>天资</span>
          <LogoDomain>5etz.com</LogoDomain>
        </LogoText>
      </Logo>
    </Page>
  );
}
